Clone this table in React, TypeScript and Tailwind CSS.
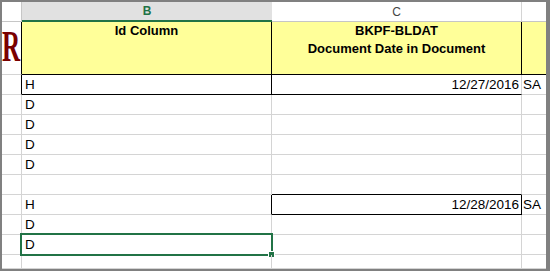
import React from 'react';

type Row = {
  b?: string;
  c?: string;
  d?: string;
  h: string;
  aR?: boolean; // black right edge on column A
  bR?: boolean;
  bB?: boolean;
  cR?: boolean;
  cB?: boolean;
  selected?: boolean;
};

const rows: Row[] = [
  { b: 'H', c: '12/27/2016', d: 'SA', h: 'h-[20px]', aR: true, bR: true, bB: true, cB: true },
  { b: 'D', h: 'h-[20px]' },
  { b: 'D', h: 'h-[20px]' },
  { b: 'D', h: 'h-[20px]' },
  { b: 'D', h: 'h-[20px]' },
  { h: 'h-[20px]', cB: true },
  { b: 'H', c: '12/28/2016', d: 'SA', h: 'h-[20px]', bR: true, cR: true, cB: true },
  { b: 'D', h: 'h-[20px]' },
  { b: 'D', h: 'h-[20px]', selected: true },
  { h: 'h-[14px]' },
];

const right = (black?: boolean) => (black ? 'border-r-black' : 'border-r-[#d4d4d4]');
const bottom = (black?: boolean) => (black ? 'border-b-black' : 'border-b-[#d4d4d4]');

const Cell = ({ className = '', children }: { className?: string; children?: React.ReactNode }) => (
  <div className={`flex items-end pb-[1px] leading-[16px] text-[13.5px] text-black whitespace-nowrap ${className}`}>
    {children}
  </div>
);

const DataRow = ({ row }: { row: Row }) => (
  <>
    <div className={`${row.h} border-r border-b ${right(row.aR)} border-b-[#d4d4d4]`} />
    <Cell className={`${row.h} relative pl-[3px] border-r border-b ${right(row.bR)} ${bottom(row.bB)}`}>
      {row.b}
      {row.selected && (
        <div className="absolute -left-[2px] -top-[2px] w-[253px] h-[23px] border-2 border-[#217346] pointer-events-none">
          <div className="absolute -right-[4px] -bottom-[4px] w-[7px] h-[7px] bg-[#217346] border border-white" />
        </div>
      )}
    </Cell>
    <Cell className={`${row.h} justify-end pr-[2px] border-r border-b ${right(row.cR)} ${bottom(row.cB)}`}>
      {row.c}
    </Cell>
    <Cell className={`${row.h} pl-[1px] border-b border-b-[#d4d4d4]`}>{row.d}</Cell>
  </>
);

export default function App() {
  return (
    <div className="w-[550px] h-[271px] overflow-hidden bg-white border-t-2 border-l-2 border-b-2 border-r-4 border-[#808080] font-['Liberation_Sans',Arial,sans-serif]">
      <div className="grid grid-cols-[20px_250px_250px_24px]">
        {/* column letters */}
        <div className="h-[20px] border-r border-b border-[#c6c6c6] bg-white" />
        <div className="h-[20px] flex items-center justify-center bg-[#e1e1e1] border-b-2 border-[#217346] text-[12px] font-bold text-[#217346]">
          B
        </div>
        <div className="h-[20px] flex items-center justify-center bg-white border-r border-b border-r-[#d4d4d4] border-b-[#c6c6c6] text-[12px] text-[#444]">
          C
        </div>
        <div className="h-[20px] bg-white border-b border-[#c6c6c6]" />

        {/* header titles */}
        <div className="h-[53px] border-r border-r-black border-b border-b-[#d4d4d4] overflow-hidden relative">
          <span className="absolute left-0 top-[2px] font-['Liberation_Serif',serif] font-bold text-[45px] leading-none text-[#7a0000] scale-x-[0.56] origin-left">
            R
          </span>
        </div>
        <div className="h-[53px] bg-[#ffff99] border-r border-b border-black text-center text-[13px] font-bold leading-[17px]">
          Id Column
        </div>
        <div className="h-[53px] bg-[#ffff99] border-r border-b border-black text-center text-[13px] font-bold leading-[17.5px]">
          BKPF-BLDAT
          <br />
          Document Date in Document
        </div>
        <div className="h-[53px] bg-[#ffff99] border-b border-black" />

        {rows.map((r, i) => (
          <DataRow key={i} row={r} />
        ))}
      </div>
    </div>
  );
}
